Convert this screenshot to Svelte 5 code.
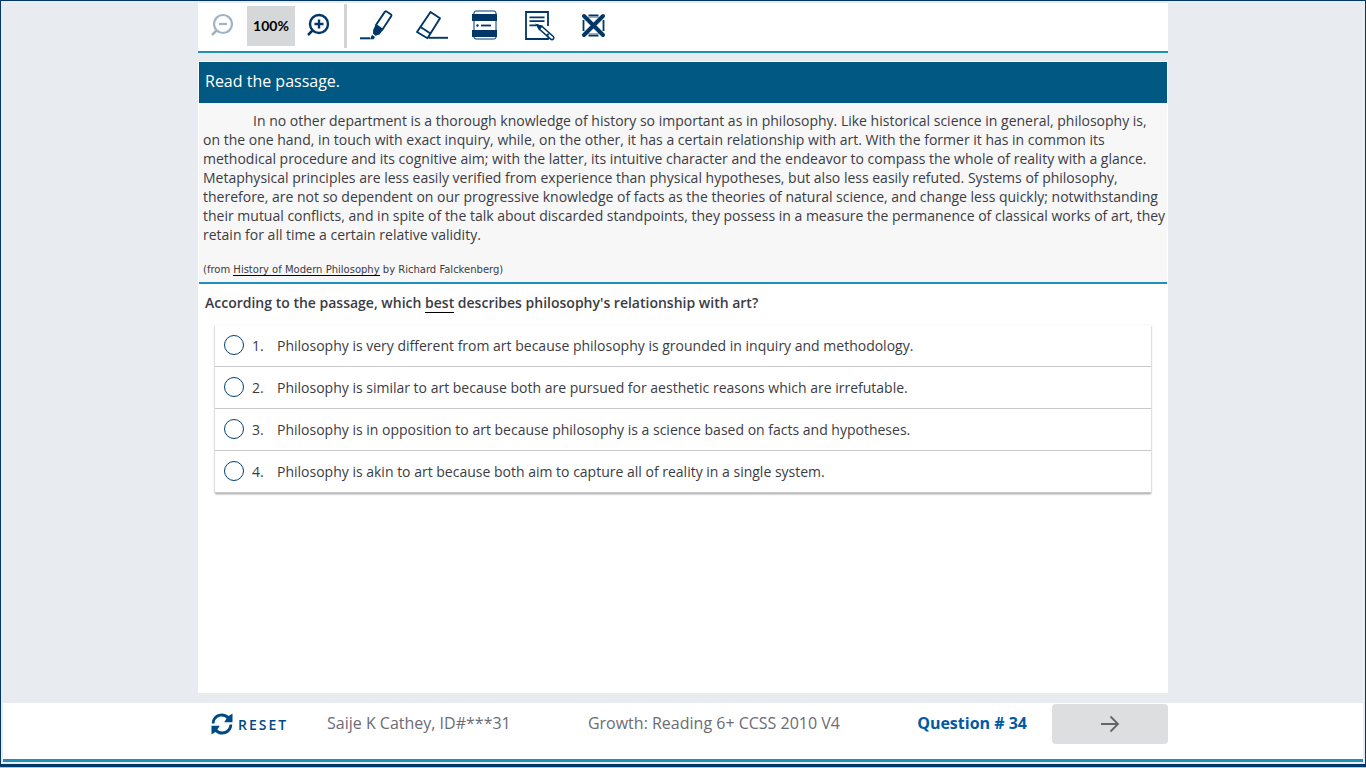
<script>
  let selected = $state(null);
  let zoom = $state(100);

  const student = "Saije K Cathey, ID#***31";
  const testName = "Growth: Reading 6+ CCSS 2010 V4";
  const questionNumber = 34;

  const choices = [
    "Philosophy is very different from art because philosophy is grounded in inquiry and methodology.",
    "Philosophy is similar to art because both are pursued for aesthetic reasons which are irrefutable.",
    "Philosophy is in opposition to art because philosophy is a science based on facts and hypotheses.",
    "Philosophy is akin to art because both aim to capture all of reality in a single system.",
  ];

  function reset() {
    selected = null;
    zoom = 100;
  }
</script>

<div class="frame">
  <div class="screen">
    <header class="toolbar column">
      <button class="tool" aria-label="Zoom out" disabled={zoom <= 100} onclick={() => (zoom -= 10)}>
        <svg width="24" height="26" viewBox="0 0 24 26" fill="none" stroke="currentColor" stroke-width="2.200">
          <circle cx="13" cy="12" r="9" />
          <path d="M9 12h8" />
          <path d="M6.500 18.500L2 23" stroke-width="2.500" />
        </svg>
      </button>
      <output class="zoom">{zoom}%</output>
      <button class="tool" aria-label="Zoom in" onclick={() => (zoom += 10)}>
        <svg width="24" height="26" viewBox="0 0 24 26" fill="none" stroke="currentColor" stroke-width="2.400">
          <circle cx="13" cy="12" r="9" />
          <path d="M8.500 12h9M13 7.500v9" />
          <path d="M6.500 18.500L2 23" stroke-width="2.500" />
        </svg>
      </button>
      <span class="divider"></span>
      <div class="tools">
        <button class="tool" aria-label="Highlighter">
          <svg width="34" height="32" viewBox="0 0 34 32">
            <path d="M26.500 2.500l4.500 3a1.200 1.200 0 0 1 .3 1.600L22.500 20.500l-6.500-4.500L24.800 2.900a1.200 1.200 0 0 1 1.700-.4z" fill="none" stroke="currentColor" stroke-width="1.900" />
            <path d="M15.500 16l7.500 5-3.500 4.500-4 1.200-2.500-2 .2-4z" fill="currentColor" />
            <path d="M12 25.800l3 2.300-1.400 2.100h-3.600z" fill="currentColor" />
            <path d="M0 29.300h10" stroke="currentColor" stroke-width="2" />
          </svg>
        </button>
        <button class="tool" aria-label="Eraser">
          <svg width="34" height="32" viewBox="0 0 34 32" fill="none" stroke="currentColor" stroke-width="1.900">
            <path d="M16.500 3l9.500 6.300L13.500 29.300 3 23z" stroke-linejoin="round" />
            <path d="M6.500 18l10 6.500" />
            <path d="M15 28.800H34" />
          </svg>
        </button>
        <button class="tool" aria-label="Line reader">
          <svg width="34" height="32" viewBox="0 0 34 32">
            <rect x="6" y="2" width="22" height="28" rx="2" fill="none" stroke="currentColor" stroke-width="1" />
            <path d="M4 5h25v7H4zM4 21h25v7H4z" fill="currentColor" />
            <circle cx="9.500" cy="16.500" r="1.200" fill="currentColor" />
            <path d="M13 16.500h10" stroke="currentColor" stroke-width="1.800" />
          </svg>
        </button>
        <button class="tool" aria-label="Notepad">
          <svg width="34" height="32" viewBox="0 0 34 32" fill="none" stroke="currentColor" stroke-width="1.800">
            <path d="M26 17V3H4v27h22v-1.500" />
            <path d="M7.500 8.300h15M7.500 12.200h15M7.500 16.300h7" />
            <path d="M15.500 16.300l4.800 1.400 11 9.800a1.800 1.800 0 0 1-2.600 2.600L17.800 20.600z" fill="#fff" stroke-width="1.500" />
            <path d="M15 16l4.500 1.300-2.200 2.700zM26.700 24.600l-2.100 2.700" fill="currentColor" />
          </svg>
        </button>
        <button class="tool" aria-label="Answer eliminator">
          <svg width="34" height="32" viewBox="0 0 34 32" fill="none" stroke="currentColor">
            <path d="M12.500 6.500h10M12.500 26.500h10M7.500 11v11M27.500 11v11" stroke-width="1.800" />
            <path d="M11.500 8.500h12M11.500 24.500h12" stroke-width="1" opacity=".4" />
            <path d="M8 7l19 19M27 7l-19 19" stroke-width="4" stroke-linecap="round" />
          </svg>
        </button>
      </div>
    </header>

    <main class="content column">
      <section class="passage">
        <h1>Read the passage.</h1>
        <div class="passage-body">
          <p class="text">
            In no other department is a thorough knowledge of history so important as in philosophy. Like historical science in general, philosophy is, on the one hand, in touch with exact inquiry, while, on the other, it has a certain relationship with art. With the former it has in common its methodical procedure and its cognitive aim; with the latter, its intuitive character and the endeavor to compass the whole of reality with a glance. Metaphysical principles are less easily verified from experience than physical hypotheses, but also less easily refuted. Systems of philosophy, therefore, are not so dependent on our progressive knowledge of facts as the theories of natural science, and change less quickly; notwithstanding their mutual conflicts, and in spite of the talk about discarded standpoints, they possess in a measure the permanence of classical works of art, they retain for all time a certain relative validity.
          </p>
          <p class="source">(from <span class="underline">History of Modern Philosophy</span> by Richard Falckenberg)</p>
        </div>
      </section>

      <fieldset class="question">
        <legend>According to the passage, which <span class="underline">best</span> describes philosophy's relationship with art?</legend>
        <div class="choices">
          {#each choices as choice, i}
            <label class="choice">
              <input type="radio" name="answer" value={i} bind:group={selected} />
              <span class="number">{i + 1}.</span>
              <span>{choice}</span>
            </label>
          {/each}
        </div>
      </fieldset>
    </main>

    <footer>
      <div class="footer-row column">
        <button class="reset" onclick={reset}>
          <svg width="22" height="22" viewBox="0 0 22 22" fill="currentColor">
            <path d="M.8 10.500C.8 4.500 5.300.5 10.800.5c2.800 0 5 1 6.800 2.600L21.500.6v8.600h-8.300l2.400-3.600c-1.300-1.300-2.900-2-4.800-2-4 0-7 2.700-7.300 6.900z" />
            <path d="M21.200 11.500c0 6-4.500 10-10 10-2.800 0-5-1-6.800-2.600L.5 21.400v-8.600h8.300l-2.400 3.600c1.300 1.300 2.900 2 4.800 2 4 0 7-2.700 7.300-6.900z" />
          </svg>
          RESET
        </button>
        <span class="info">{student}</span>
        <span class="info">{testName}</span>
        <strong>Question # {questionNumber}</strong>
        <button class="next" aria-label="Next question">
          <svg width="20" height="18" viewBox="0 0 20 18" fill="none" stroke="currentColor" stroke-width="1.800">
            <path d="M1 9h17M10.500 1.500L18 9l-7.500 7.500" />
          </svg>
        </button>
      </div>
    </footer>
  </div>
</div>

<style>
  :global(body) {
    margin: 0;
    background: #e8ebf0;
  }
  .frame {
    box-sizing: border-box;
    min-height: 100vh;
    display: flex;
    padding-bottom: 1px;
    background: #b4c6d8;
    color: #3b3c43;
    font: 14px/19px "Open Sans", sans-serif;
  }
  .screen {
    flex: 1;
    min-width: 0;
    display: flex;
    flex-direction: column;
    padding: 2px;
    border: 1px solid #003767;
    border-bottom-width: 3px;
    background: #e8ebf0;
  }
  .column {
    box-sizing: border-box;
    width: 100%;
    max-width: 970px;
    margin: 0 auto;
  }
  button {
    font: inherit;
    border: 0;
    padding: 0;
    background: none;
    cursor: pointer;
  }
  svg {
    display: block;
  }

  .toolbar {
    display: flex;
    align-items: center;
    height: 50px;
    padding: 0 0 2px 12px;
    border-bottom: 2px solid #1f8fbb;
    background: #fff;
  }
  .tool {
    padding-bottom: 2px;
    color: #003767;
  }
  .tool:disabled {
    color: #9db3c8;
  }
  .zoom {
    width: 48px;
    margin: 0 11px 0 13px;
    line-height: 40px;
    text-align: center;
    background: #d6d7d9;
    color: #000;
    font-family: Lato, sans-serif;
    font-weight: bold;
  }
  .divider {
    width: 3px;
    height: 44px;
    margin: 0 13px 0 14px;
    background: #d3d3d5;
  }
  .tools {
    display: flex;
    gap: 20px;
  }

  .content {
    flex: 1;
    margin: 8px auto 10px;
    padding: 1px;
    background: #fff;
  }
  h1 {
    margin: 0;
    padding: 0 6px 2px;
    background: #005883;
    color: #fff;
    font-size: 16px;
    font-weight: normal;
    line-height: 39px;
  }
  .passage-body {
    padding: 8px 0 3px 4px;
    border-bottom: 2px solid #1f8fbb;
    background: #f7f7f8;
  }
  .text {
    margin: 0;
    text-indent: 50px;
  }
  .source {
    margin: 16px 0 0;
    font-family: "DejaVu Sans", sans-serif;
    font-size: 10px;
  }
  .underline {
    border-bottom: 1px solid #000;
  }

  .question {
    min-width: 0;
    margin: 0;
    padding: 0;
    border: 0;
  }
  legend {
    padding: 9px 6px 13px;
    font-weight: 600;
  }
  .choices {
    margin: 0 16px;
    box-shadow: 0 1px 2px rgba(0, 0, 0, 0.4);
  }
  .choice {
    display: flex;
    align-items: center;
    height: 41px;
    padding-left: 9px;
    border-bottom: 1px solid #c9c9cb;
    background: #fff;
  }
  input {
    appearance: none;
    box-sizing: border-box;
    width: 20px;
    height: 20px;
    margin: 0 8px 2px 0;
    border: 1px solid #003f72;
    border-radius: 50%;
  }
  input:checked {
    background: radial-gradient(#003f72 50%, #fff 55%);
  }
  .number {
    width: 25px;
  }

  footer {
    border-bottom: 3px solid #1f8fbb;
    background: #fff;
  }
  .footer-row {
    display: flex;
    align-items: center;
    height: 56px;
    padding-bottom: 14px;
    font-size: 16px;
    color: #6b6c75;
  }
  .reset {
    display: flex;
    align-items: center;
    gap: 5px;
    width: 129px;
    padding-left: 13px;
    color: #004b87;
    font-size: 14px;
    font-weight: 600;
    letter-spacing: 2px;
  }
  .info {
    margin-right: auto;
    padding-bottom: 2px;
  }
  strong {
    margin-right: 25px;
    padding-bottom: 2px;
    color: #005ba6;
  }
  .next {
    display: flex;
    align-items: center;
    justify-content: center;
    width: 116px;
    height: 40px;
    border-radius: 4px;
    background: #dddee0;
    color: #646568;
  }
</style>
